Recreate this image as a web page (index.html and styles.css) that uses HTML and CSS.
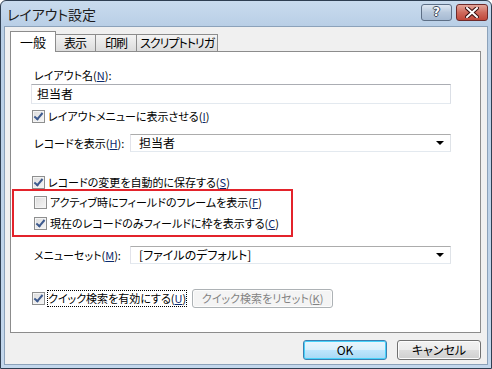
FILE: index.html
```html
<!DOCTYPE html>
<html lang="ja">
<head>
    <meta charset="UTF-8">
    <title>レイアウト設定</title>
    <link rel="stylesheet" href="styles.css">
</head>
<body>
    <div class="window">
        <div class="titlebar">
            <span class="title">レイアウト設定</span>
            <div class="caption-buttons">
                <div class="cap-btn help">?</div>
                <div class="cap-btn close">
                    <svg width="14" height="11" viewBox="0 0 14 11">
                        <path d="M2 1 L12 10 M12 1 L2 10" stroke="#3a1010" stroke-width="4" stroke-linecap="square"/>
                        <path d="M2 1 L12 10 M12 1 L2 10" stroke="#fff" stroke-width="2" stroke-linecap="square"/>
                    </svg>
                </div>
            </div>
        </div>

        <div class="client">
            <div class="tabs">
                <div class="tab active">一般</div>
                <div class="tab">表示</div>
                <div class="tab">印刷</div>
                <div class="tab">スクリプトトリガ</div>
            </div>

            <div class="panel">
                <div class="label first">レイアウト名(<u>N</u>):</div>
                <div class="textbox">担当者</div>

                <label class="check row-menu">
                    <span class="box checked"></span>
                    <span>レイアウトメニューに表示させる(<u>I</u>)</span>
                </label>

                <div class="field row-record">
                    <span class="field-label">レコードを表示(<u>H</u>):</span>
                    <div class="select">担当者<span class="arrow"></span></div>
                </div>

                <label class="check row-save">
                    <span class="box checked"></span>
                    <span>レコードの変更を自動的に保存する(<u>S</u>)</span>
                </label>

                <div class="highlight">
                    <label class="check">
                        <span class="box"></span>
                        <span>アクティブ時にフィールドのフレームを表示(<u>F</u>)</span>
                    </label>
                    <label class="check">
                        <span class="box checked"></span>
                        <span>現在のレコードのみフィールドに枠を表示する(<u>C</u>)</span>
                    </label>
                </div>

                <div class="field row-menuset">
                    <span class="field-label">メニューセット(<u>M</u>):</span>
                    <div class="select">[ファイルのデフォルト]<span class="arrow"></span></div>
                </div>

                <div class="quick">
                    <label class="check">
                        <span class="box checked"></span>
                        <span class="focus">クイック検索を有効にする(<u>U</u>)</span>
                    </label>
                    <div class="button disabled">クイック検索をリセット(<u>K</u>)</div>
                </div>
            </div>

            <div class="footer">
                <div class="button default">OK</div>
                <div class="button">キャンセル</div>
            </div>
        </div>
    </div>
</body>
</html>
```

FILE: styles.css
```css
body {
    margin: 0;
    font-family: "Noto Sans CJK JP", "Noto Sans", sans-serif;
    font-size: 11px;
    font-feature-settings: "palt";
    color: #000;
    background: #fff;
    white-space: nowrap;
}

.window {
    width: 492px;
    height: 369px;
    box-sizing: border-box;
    border: 1px solid #2f3f52;
    border-radius: 6px 6px 0 0;
    background: linear-gradient(#c9dbee, #b9cfe6 25px, #c3d7ec);
    display: flex;
    flex-direction: column;
    overflow: hidden;
}

.titlebar {
    height: 25px;
    display: flex;
    align-items: center;
    justify-content: space-between;
    padding: 0 3px 0 6px;
    flex-shrink: 0;
}

.title {
    font-size: 14px;
    color: #1c1c1c;
}

.caption-buttons {
    display: flex;
    gap: 4px;
    margin-top: -3px;
}

.cap-btn {
    width: 29px;
    height: 15px;
    border: 1px solid #5d6f86;
    border-radius: 3px;
    display: flex;
    align-items: center;
    justify-content: center;
}

.help {
    background: linear-gradient(#dfe8f3, #b8c9dd 50%, #a6bad2);
    color: #fff;
    font-family: "DejaVu Sans", sans-serif;
    font-weight: bold;
    font-size: 12px;
    text-shadow: 1px 0 0 #3c4a5a, -1px 0 0 #3c4a5a, 0 1px 0 #3c4a5a, 0 -1px 0 #3c4a5a;
}

.close {
    width: 30px;
    border-color: #6e2a2a;
    background: linear-gradient(#e3a59a, #cf6a5c 50%, #c0473a);
}

.client {
    flex: 1;
    margin: 0 3px 3px;
    background: #f0f0f0;
    border: 1px solid #8ca2ba;
    padding: 4px 6px 0 5px;
    display: flex;
    flex-direction: column;
}

.tabs {
    display: flex;
    align-items: flex-end;
    height: 20px;
    position: relative;
    z-index: 1;
}

.tab {
    height: 17px;
    min-width: 42px;
    box-sizing: border-box;
    padding: 0 3px;
    text-align: center;
    font-size: 12px;
    letter-spacing: -1px;
    border: 1px solid #8c8c8c;
    border-bottom: none;
    background: linear-gradient(#f4f4f4, #dcdcdc);
    line-height: 16px;
    margin-left: -1px;
}

.tab.active {
    height: 21px;
    width: 46px;
    margin-bottom: -1px;
    padding: 0;
    background: #fff;
    margin-left: 0;
    margin-right: -1px;
    z-index: 2;
    position: relative;
    font-size: 13px;
    letter-spacing: 0;
    line-height: 20px;
}

.panel {
    height: 282px;
    width: 471px;
    box-sizing: border-box;
    border: 1px solid #8c8c8c;
    background: #fff;
    padding: 0 29px 0 20px;
    flex-shrink: 0;
}

.label {
    margin-left: 3px;
    line-height: 16px;
}

.label.first {
    margin-top: 15px;
}

u {
    text-decoration: underline;
    color: #0a2a6e;
}

.textbox {
    height: 20px;
    box-sizing: border-box;
    border: 1px solid #abadb3;
    border-color: #abadb3 #dbdfe6 #e3e9ef #e2e3ea;
    padding-left: 5px;
    font-size: 12px;
    line-height: 18px;
    margin-top: 1px;
}

.check {
    display: flex;
    align-items: center;
    gap: 3px;
    margin-left: 1px;
    height: 16px;
    line-height: 16px;
}

.box {
    width: 11px;
    height: 11px;
    border: 1px solid #8e8f8f;
    background: linear-gradient(135deg, #dcdcdc, #f6f6f6);
    box-shadow: inset 0 0 0 1px #f4f4f4;
    flex-shrink: 0;
    position: relative;
}

.box.checked::after {
    content: "";
    position: absolute;
    left: 3px;
    top: 0;
    width: 3px;
    height: 7px;
    border: solid #3d5a8e;
    border-width: 0 2px 2px 0;
    transform: rotate(40deg);
}

.row-menu {
    margin-top: 4px;
}

.field {
    display: flex;
    align-items: center;
}

.field-label {
    width: 96px;
    margin-left: 3px;
}

.select {
    flex: 1;
    height: 18px;
    box-sizing: border-box;
    border: 1px solid #acacac;
    border-color: #acacac #dfe3e8 #e3e9ef #e2e3ea;
    padding-left: 8px;
    font-size: 12px;
    line-height: 16px;
    position: relative;
}

.arrow {
    position: absolute;
    right: 6px;
    top: 6px;
    border-left: 4px solid transparent;
    border-right: 4px solid transparent;
    border-top: 4px solid #000;
}

.row-record {
    margin-top: 10px;
}

.row-save {
    margin-top: 22px;
}

.highlight {
    margin: -1px 0 0 -19px;
    width: 281px;
    height: 48px;
    border: 2px solid #e3232b;
    padding: 3px 0 0 19px;
    box-sizing: border-box;
    display: flex;
    flex-direction: column;
    gap: 5px;
}

.row-menuset {
    margin-top: 9px;
}

.quick {
    display: flex;
    align-items: center;
    gap: 6px;
    margin-top: 25px;
}

.focus {
    outline: 1px dotted #000;
    line-height: 15px;
}

.button {
    height: 19px;
    box-sizing: border-box;
    border: 1px solid #707070;
    border-radius: 3px;
    background: linear-gradient(#f2f2f2, #ebebeb 50%, #dddddd 51%, #cfcfcf);
    box-shadow: inset 0 0 0 1px #fcfcfc;
    text-align: center;
    line-height: 17px;
}

.button.disabled {
    width: 141px;
    border-color: #adb2b5;
    background: #f4f4f4;
    color: #838383;
}

.button.disabled u {
    color: #838383;
}

.footer {
    display: flex;
    justify-content: flex-end;
    gap: 10px;
    padding: 7px 0 0;
}

.footer .button {
    width: 84px;
    height: 20px;
    font-size: 12px;
}

.button.default {
    border-color: #3c7fb1;
    background: linear-gradient(#eaf6fd, #d9f0fc 50%, #bee6fd 51%, #a7d9f5);
    box-shadow: inset 0 0 0 1px #48d2fa;
}
```
